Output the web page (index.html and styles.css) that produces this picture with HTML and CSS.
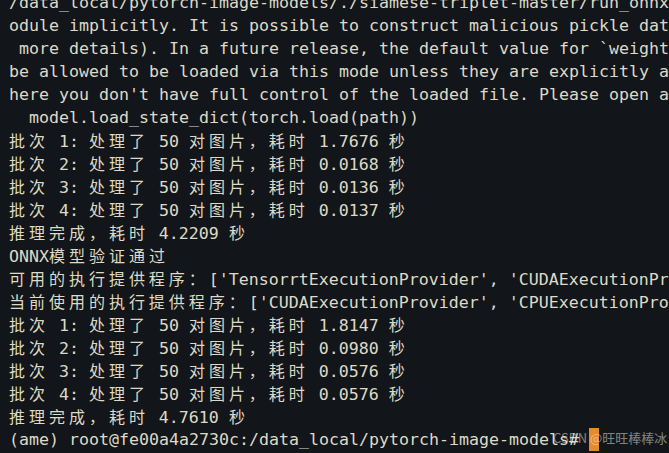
FILE: index.html
```html
<!DOCTYPE html>
<html lang="zh-CN">
<head>
<meta charset="utf-8">
<title>Terminal</title>
<link rel="stylesheet" href="styles.css">
</head>
<body>
<div class="term">
  <div class="ln">/data_local/pytorch-image-models/./siamese-triplet-master/run_onnx_verify.py:21: FutureWarning: You are using `torch.load` with `weights_only=False`</div>
  <div class="ln">odule implicitly. It is possible to construct malicious pickle data which will execute arbitrary code during unpickling</div>
  <div class="ln"> more details). In a future release, the default value for `weights_only` will be flipped to `True`. This limits the functions</div>
  <div class="ln">be allowed to be loaded via this mode unless they are explicitly allowlisted by the user via `torch.serialization`</div>
  <div class="ln">here you don't have full control of the loaded file. Please open an issue on GitHub for any issues related to this</div>
  <div class="ln">  model.load_state_dict(torch.load(path))</div>
  <div class="ln"><span class="w">批次</span> 1: <span class="w">处理了</span> 50 <span class="w">对图片，耗时</span> 1.7676 <span class="w">秒</span></div>
  <div class="ln"><span class="w">批次</span> 2: <span class="w">处理了</span> 50 <span class="w">对图片，耗时</span> 0.0168 <span class="w">秒</span></div>
  <div class="ln"><span class="w">批次</span> 3: <span class="w">处理了</span> 50 <span class="w">对图片，耗时</span> 0.0136 <span class="w">秒</span></div>
  <div class="ln"><span class="w">批次</span> 4: <span class="w">处理了</span> 50 <span class="w">对图片，耗时</span> 0.0137 <span class="w">秒</span></div>
  <div class="ln"><span class="w">推理完成，耗时</span> 4.2209 <span class="w">秒</span></div>
  <div class="ln">ONNX<span class="w">模型验证通过</span></div>
  <div class="ln"><span class="w">可用的执行提供程序：</span>['TensorrtExecutionProvider', 'CUDAExecutionProvider', 'CPUExecutionProvider']</div>
  <div class="ln"><span class="w">当前使用的执行提供程序：</span>['CUDAExecutionProvider', 'CPUExecutionProvider']</div>
  <div class="ln"><span class="w">批次</span> 1: <span class="w">处理了</span> 50 <span class="w">对图片，耗时</span> 1.8147 <span class="w">秒</span></div>
  <div class="ln"><span class="w">批次</span> 2: <span class="w">处理了</span> 50 <span class="w">对图片，耗时</span> 0.0980 <span class="w">秒</span></div>
  <div class="ln"><span class="w">批次</span> 3: <span class="w">处理了</span> 50 <span class="w">对图片，耗时</span> 0.0576 <span class="w">秒</span></div>
  <div class="ln"><span class="w">批次</span> 4: <span class="w">处理了</span> 50 <span class="w">对图片，耗时</span> 0.0576 <span class="w">秒</span></div>
  <div class="ln"><span class="w">推理完成，耗时</span> 4.7610 <span class="w">秒</span></div>
  <div class="ln">(ame) root@fe00a4a2730c:/data_local/pytorch-image-models# <span class="cursor"> </span></div>
</div>
<div class="watermark">CSDN @旺旺棒棒冰</div>
</body>
</html>
```
FILE: styles.css
```css
html, body {
  margin: 0;
  padding: 0;
  background: #121519;
  width: 669px;
  height: 453px;
  overflow: hidden;
}
.term {
  margin-top: -9px;
  padding-left: 9px;
  font-family: "DejaVu Sans Mono", monospace;
  font-size: 16.61px;
  line-height: 23px;
  color: #dedac6;
}
.ln {
  height: 23px;
  white-space: pre;
  overflow: hidden;
}
.w {
  font-family: "Noto Sans CJK SC", sans-serif;
  font-size: 16px;
  letter-spacing: 3.98px;
  line-height: 23px;
}
.cursor {
  display: inline-block;
  width: 10px;
  height: 23px;
  vertical-align: top;
  background: #e88a2c;
}
.watermark {
  position: absolute;
  left: 553px;
  top: 429px;
  font-family: "Noto Sans CJK SC", sans-serif;
  font-size: 13px;
  line-height: 18px;
  color: rgba(225, 225, 225, 0.55);
  white-space: pre;
}
```
